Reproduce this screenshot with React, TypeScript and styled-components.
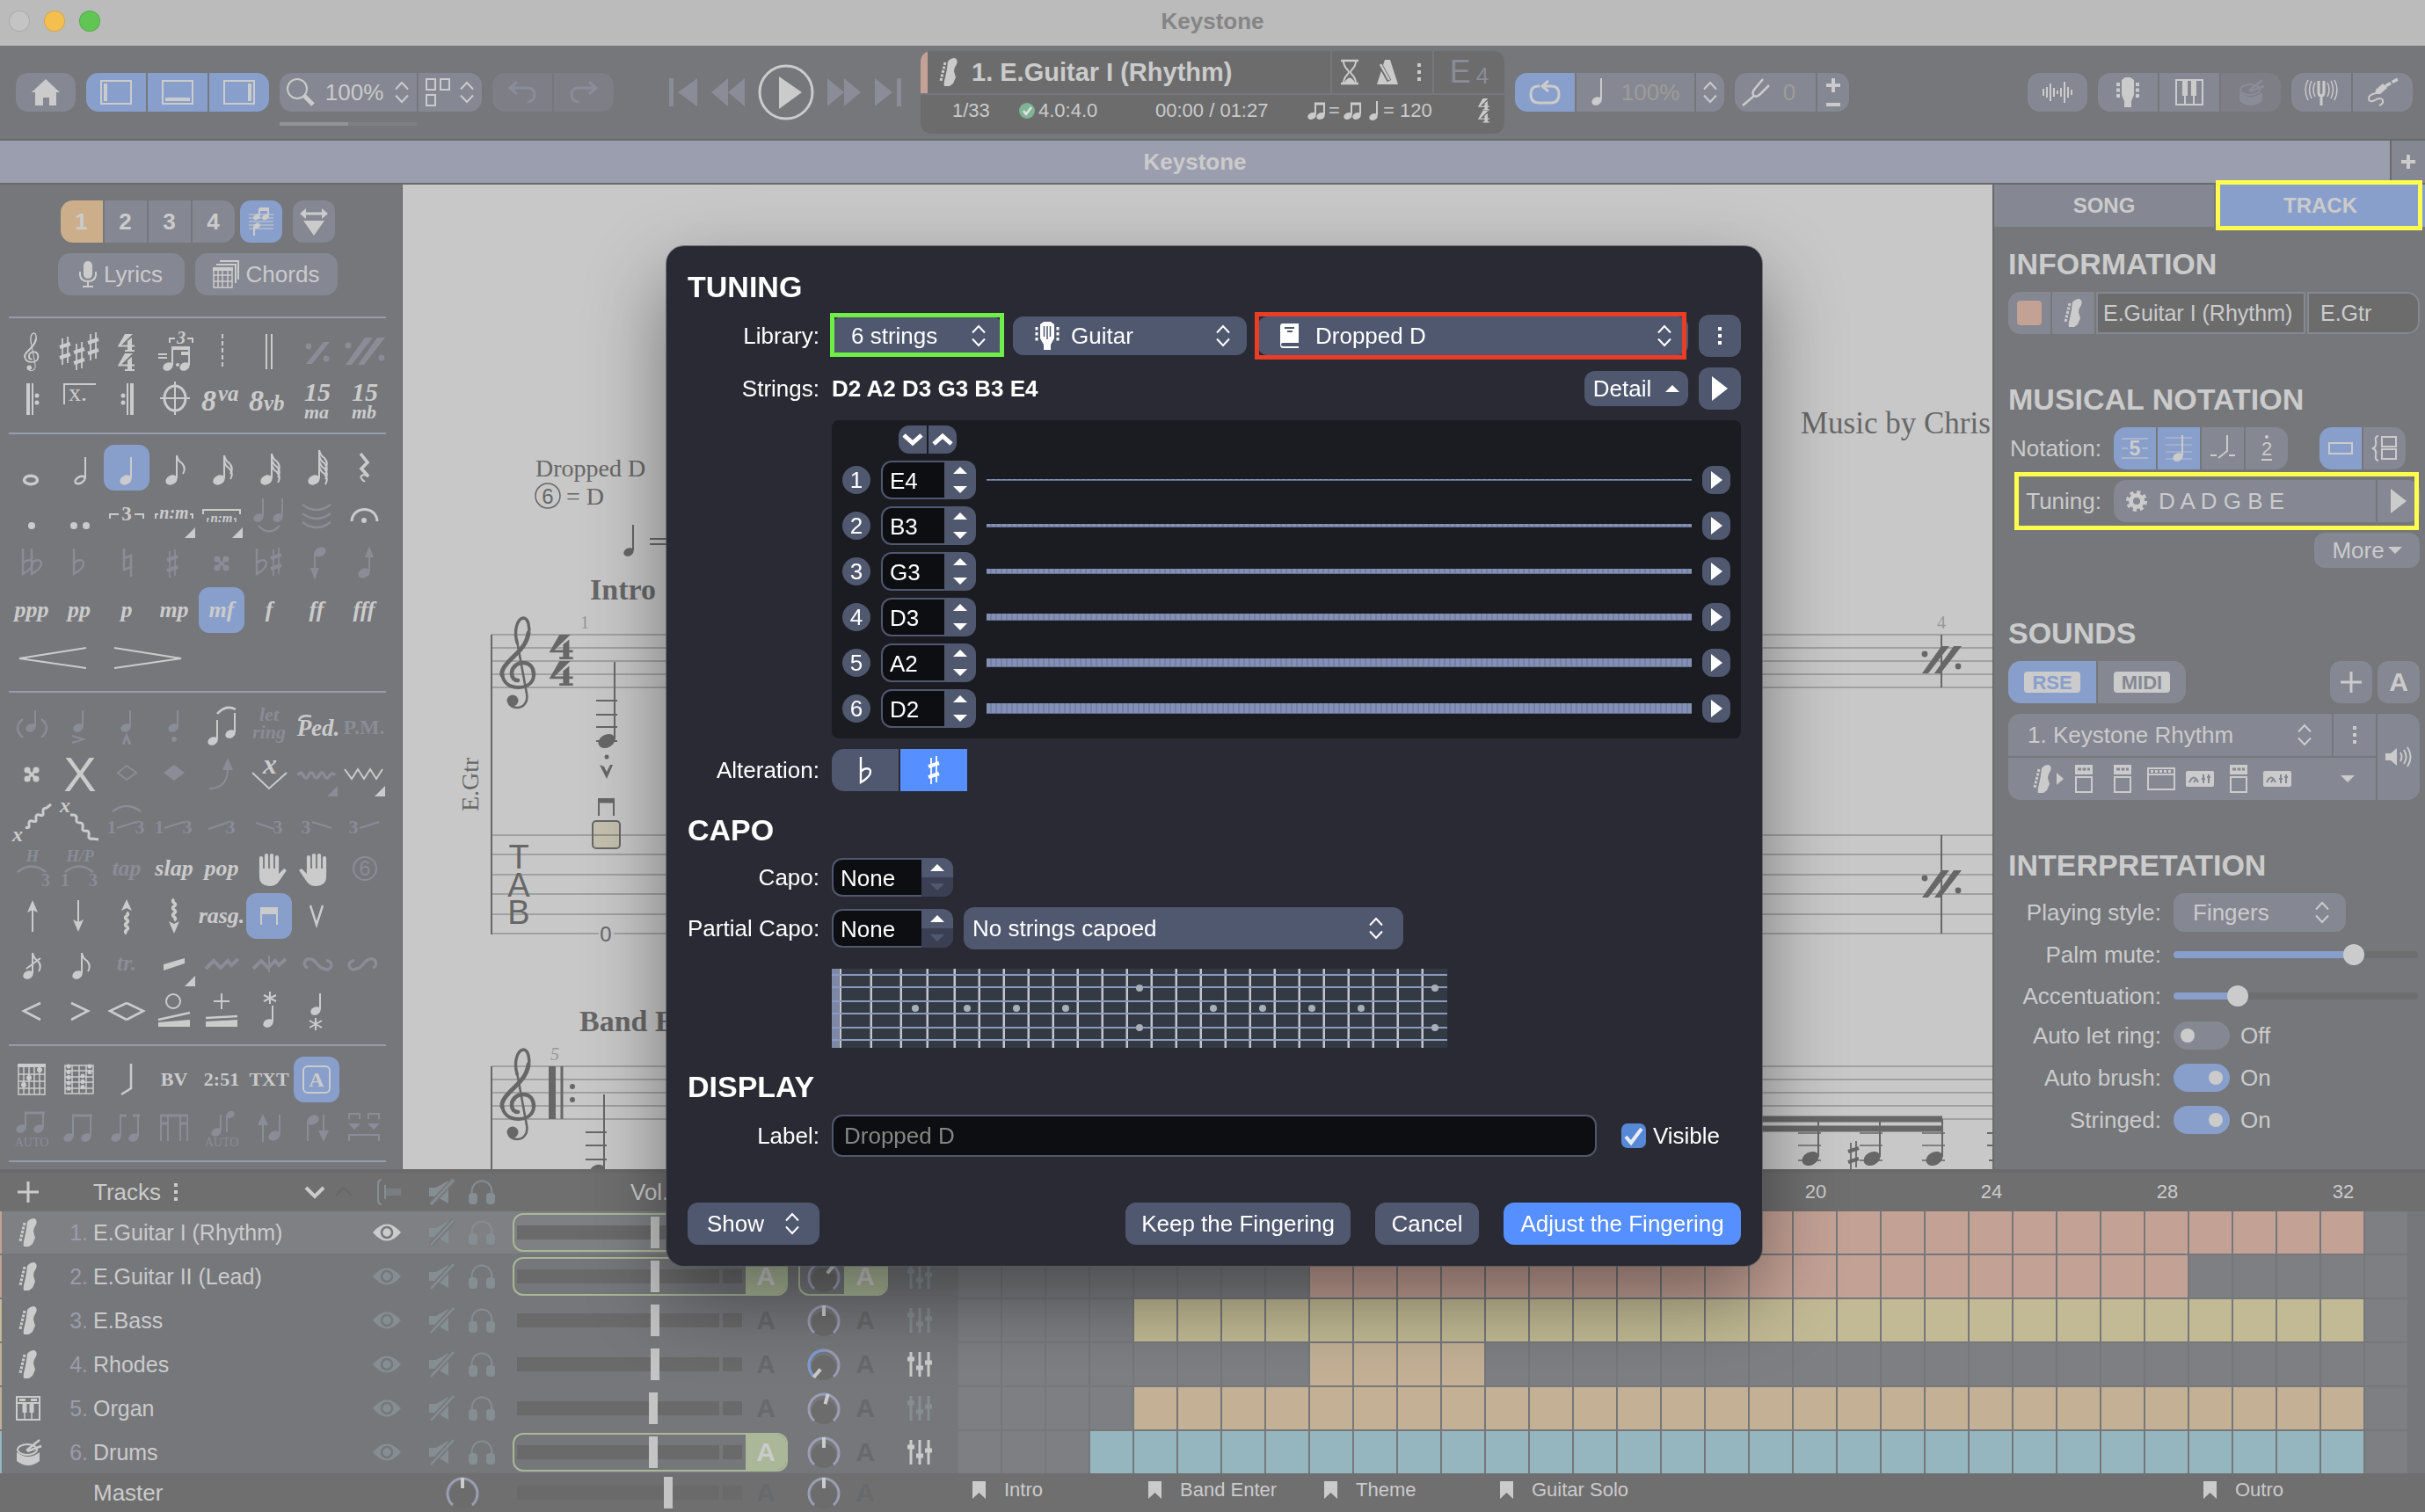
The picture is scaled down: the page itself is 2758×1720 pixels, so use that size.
import React from "react";
import styled, { createGlobalStyle, css } from "styled-components";

const c = {
  base: "#76777b",
  deep: "#6c6c6d",
  header: "#6f6f70",
  line: "#6a6a6b",
  button: "#858792",
  active: "#889fcc",
  text: "#cbcbcb",
  faint: "#8a8c97",
  teal: "#858e93",
  green: "#aab798",
  dialog: "#2a2a34",
  control: "#50586f",
  blue: "#568fff",
  field: "#0d0e11",
  ink: "#676767",
};
const sans = `"Liberation Sans", Arial, sans-serif`;
const serif = `"Liberation Serif", "Times New Roman", serif`;

const Global = createGlobalStyle`
  *, *::before, *::after { box-sizing: border-box; }
  body { margin: 0; background: ${c.base}; color: ${c.text}; font: 26px/30px ${sans}; overflow: hidden; }
  button, input, select { font: inherit; color: inherit; margin: 0; padding: 0; border: 0; background: none; }
  svg { display: block; flex: none; overflow: visible; }
  h2 { margin: 0; font-size: 34px; line-height: 40px; font-weight: 700; }
`;

/* ---------- drawing helpers ---------- */

type Kids = { children?: React.ReactNode };
const Svg = ({ w, h, vb, sw = 2, children }: Kids & { w: number; h: number; vb?: string; sw?: number }) => (
  <svg width={w} height={h} viewBox={vb || `0 0 ${w} ${h}`} fill="none" stroke="currentColor" strokeWidth={sw} aria-hidden="true">
    {children}
  </svg>
);
const Fill = ({ d }: { d: string }) => <path d={d} fill="currentColor" stroke="none" />;
const Dot = ({ x, y, r = 3 }: { x: number; y: number; r?: number }) => <circle cx={x} cy={y} r={r} fill="currentColor" stroke="none" />;
const T = ({ x, y, s, b, i, a = "middle", f = serif, children }: Kids & { x: number; y: number; s: number; b?: boolean; i?: boolean; a?: "middle" | "start" | "end"; f?: string }) => (
  <text x={x} y={y} fontSize={s} fontFamily={f} fontWeight={b ? 700 : 400} fontStyle={i ? "italic" : "normal"} textAnchor={a} fill="currentColor" stroke="none">
    {children}
  </text>
);
const Note = ({ x, y, h = 26, f = 0, r = 7, down }: { x: number; y: number; h?: number; f?: number; r?: number; down?: boolean }) => {
  const sx = down ? x - r + 1 : x + r - 1;
  const top = y - h;
  return (
    <g>
      <ellipse cx={x} cy={y} rx={r} ry={r * 0.74} transform={`rotate(-28 ${x} ${y})`} fill="currentColor" stroke="none" />
      <path d={`M${sx} ${down ? y + 1 : y - 2}V${down ? y + h : top}`} />
      {Array.from({ length: f }, (_, n) => (
        <path key={n} d={`M${sx} ${top + n * 6}q1 6 6 9q5 6 1 12`} />
      ))}
    </g>
  );
};
const Sharp = ({ x, y, k = 1 }: { x: number; y: number; k?: number }) => (
  <g transform={`translate(${x} ${y}) scale(${k})`}>
    <path d="M-3 -14V16M3 -16V14" strokeWidth="1.8" />
    <path d="M-6 -4L6 -8M-6 8L6 4" strokeWidth="4" />
  </g>
);
const Flat = ({ x, y, k = 1 }: { x: number; y: number; k?: number }) => (
  <g transform={`translate(${x} ${y}) scale(${k})`}>
    <path d="M-5 -16V13C2 9 6 5 6 1C6 -4 -1 -4 -5 1" strokeWidth="2.4" />
  </g>
);
const Clef = ({ x, y, k = 1 }: { x: number; y: number; k?: number }) => (
  <g transform={`translate(${x} ${y}) scale(${k})`} strokeLinecap="round">
    <path d="M20 30C16 14 21 3 27 2C33 2 35 13 33 21" strokeWidth="3.4" />
    <path d="M33 19C31 33 22 40 12 50C4 58 2 63 3 67" strokeWidth="5" />
    <path d="M3 65C4 76 12 81 22 81C33 81 39 74 39 67" strokeWidth="4" />
    <path d="M39 67C39 58 34 53 27 53C19 53 14 59 14 65C14 70 17 73 21 73" strokeWidth="4.6" />
    <path d="M20 28L31 88C33 98 27 104 20 104C15 104 11 101 11 98" strokeWidth="2.6" />
    <circle cx="15" cy="96" r="6.5" fill="currentColor" stroke="none" />
  </g>
);
const Four = ({ x, y, k }: { x: number; y: number; k: number }) => (
  <g transform={`translate(${x} ${y}) scale(${k})`}>
    <path d="M0 14L8 0H17L4 12.5H11V8L16 4V12.5H19V14.5H16V18H19V20H8V18H11V14.5H0Z" fill="currentColor" stroke="none" />
  </g>
);
const Repeat = ({ x, y, n = 1 }: { x: number; y: number; n?: number }) => (
  <g>
    {n === 1 ? <Fill d={`M${x - 13} ${y + 13}L${x + 7} ${y - 12}H${x + 14}L${x - 6} ${y + 13}Z`} /> : (
      <Fill d={`M${x - 22} ${y + 15}L${x} ${y - 16}H${x + 9}L${x - 15} ${y + 15}ZM${x - 8} ${y + 15}L${x + 14} ${y - 16}H${x + 23}L${x - 1} ${y + 15}Z`} />
    )}
    <Dot x={x - (n === 1 ? 10 : 19)} y={y - 7} r={3.4} />
    <Dot x={x + (n === 1 ? 10 : 19)} y={y + 7} r={3.4} />
  </g>
);
const Corner = () => <Fill d="M50 52H38L50 40Z" />;
const Arc = ({ d }: { d: string }) => <path d={d} strokeWidth="2.5" />;

const Chevrons = () => (
  <Svg w={18} h={26}><path d="M2 9.5L9 2L16 9.5M2 16.5L9 24L16 16.5" /></Svg>
);
const GuitarHead = () => (
  <Svg w={24} h={32}>
    <Fill d="M11 4Q14 0 19 0Q23 2 21 7Q18 11 18 15L20 22L17 29L13 32H7Q6 29 8 22Q10 14 11 4Z" />
    <path d="M8 5L3 26" strokeWidth="3" strokeDasharray="3 1.6" />
  </Svg>
);
const Headstock = () => (
  <Svg w={28} h={34}>
    <Fill d="M7 3L11 0H17L21 3V20L18 27V34H10V27L7 20Z" />
    <path d="M3 6V23M25 6V23" strokeWidth="4" strokeDasharray="4 2.5" />
  </Svg>
);
const DialogHeadstock = () => (
  <Svg w={28} h={32}>
    <Fill d="M6 3L10 0H18L22 3V19L18 26V32H10V26L6 19Z" />
    <path d="M2 6V22M26 6V22" strokeWidth="3" strokeDasharray="3.5 2.5" />
    <path d="M10.500 5V17M14 5V20M17.500 5V17" stroke={c.control} strokeWidth="1.500" />
  </Svg>
);
const Piano = () => (
  <Svg w={32} h={30}>
    <rect x="1" y="1" width="30" height="28" />
    <path d="M11 1V29M21 1V29" /><path d="M11 1V19M21 1V19" strokeWidth="6" />
  </Svg>
);
const Organ = () => (
  <Svg w={28} h={28}>
    <rect x="1" y="1" width="26" height="26" /><path d="M1 8H27" /><path d="M4 4.500H11M17 4.500H24" strokeWidth="3" />
    <path d="M10 8V27M18 8V27" strokeWidth="1.500" /><path d="M10 8V19M18 8V19" strokeWidth="5" />
  </Svg>
);
const Drum = () => (
  <Svg w={32} h={32}>
    <Fill d="M3 16Q16 26 29 16V26Q16 36 3 26Z" />
    <ellipse cx="15" cy="13" rx="11" ry="6" /><path d="M14 14L29 2M15 15L31 9" strokeWidth="2.500" />
  </Svg>
);
const PlayGlyph = ({ w = 18, h = 28 }: { w?: number; h?: number }) => (
  <Svg w={w} h={h}><Fill d={`M0 0L${w} ${h / 2}L0 ${h}Z`} /></Svg>
);
const Tri = ({ up, w = 14 }: { up?: boolean; w?: number }) => (
  <Svg w={w} h={8}><Fill d={up ? `M0 8L${w / 2} 0L${w} 8Z` : `M0 0L${w / 2} 8L${w} 0Z`} /></Svg>
);
const More3 = () => <Svg w={6} h={22}><path d="M3 1V5M3 9V13M3 17V21" strokeWidth="4" /></Svg>;
const Plus = ({ s = 22, t = 3 }: { s?: number; t?: number }) => (
  <Svg w={s} h={s} sw={t}><path d={`M${s / 2} 0V${s}M0 ${s / 2}H${s}`} /></Svg>
);

/* ---------- palette glyphs, each in a 52 x 52 box ---------- */

const wave = "q3 -6 6 0t6 0t6 0t6 0t6 0t6 0";
const glyphs: Record<string, React.ReactNode> = {
  clef: <Clef x={17} y={4} k={0.42} />,
  key: <><Sharp x={10} y={25} /><Sharp x={26} y={31} /><Sharp x={42} y={20} /></>,
  time: <><Four x={16} y={6} k={1} /><Four x={16} y={28} k={1} /></>,
  feel: <><T x={34} y={17} s={20} b i>3</T><path d="M21 16V11H27M41 11H47V16" /><path d="M8 29H18M8 33H18" /><Note x={19} y={43} r={6} h={22} /><Note x={38} y={43} r={6} h={22} /><path d="M23 22H44" strokeWidth="4" /><path d="M34 28H44" strokeWidth="4" /><Dot x={30} y={41} r={2} /></>,
  dashed: <path d="M27 6V46" strokeDasharray="5 3" />,
  dbl: <path d="M23 6V46M29 6V46" />,
  sim1: <Repeat x={27} y={27} />,
  sim2: <Repeat x={27} y={26} n={2} />,
  rptStart: <><path d="M22 8V44" strokeWidth="4" /><path d="M27 8V44" /><Dot x={32} y={22} r={2.5} /><Dot x={32} y={30} r={2.5} /></>,
  volta: <><path d="M9 32V9H45" /><T x={14} y={28} s={28} a="start">x.</T></>,
  rptEnd: <><path d="M32 8V44" strokeWidth="4" /><path d="M27 8V44" /><Dot x={22} y={22} r={2.5} /><Dot x={22} y={30} r={2.5} /></>,
  coda: <><ellipse cx="27" cy="25" rx="12" ry="14" strokeWidth="3" /><path d="M27 6V44M10 25H44" /></>,
  va: <><T x={3} y={39} s={34} b i a="start">8</T><T x={22} y={28} s={25} i b a="start">va</T></>,
  vb: <><T x={3} y={39} s={34} b i a="start">8</T><T x={20} y={39} s={25} i b a="start">vb</T></>,
  ma: <><T x={27} y={28} s={30} b i>15</T><T x={26} y={48} s={22} i b>ma</T></>,
  mb: <><T x={27} y={28} s={30} b i>15</T><T x={26} y={48} s={22} i b>mb</T></>,
  n1: <ellipse cx="25" cy="40" rx="7.500" ry="4.800" strokeWidth="3.500" />,
  n2: <><ellipse cx="27" cy="40" rx="6" ry="3.500" transform="rotate(-28 27 40)" strokeWidth="2.400" /><path d="M33 38V14" /></>,
  n4: <Note x={25} y={40} />,
  n8: <Note x={23} y={40} h={28} f={1} />,
  n16: <Note x={23} y={40} h={28} f={2} />,
  n32: <Note x={23} y={40} h={30} f={3} />,
  n64: <Note x={23} y={40} h={34} f={4} />,
  rest: <><path d="M22 10L30 20L23 27L31 36" strokeWidth="3.600" /><path d="M31 36C24 32 18 36 27 42" /></>,
  dot1: <Dot x={26} y={38} r={4} />,
  dot2: <><Dot x={20} y={38} r={4} /><Dot x={34} y={38} r={4} /></>,
  trip: <><path d="M7 30V25H17M35 25H45V30" /><T x={26} y={32} s={23} b>3</T></>,
  nm: <><path d="M5 30V25H8M44 25H47V30" /><T x={26} y={30} s={20} b i>n:m</T><Corner /></>,
  nm2: <><path d="M5 25V20H47V25" /><path d="M10 34V30H12M40 30H42V34" strokeWidth="1.500" /><T x={26} y={34} s={15} b i>n:m</T><Corner /></>,
  tie: <><Note x={14} y={29} r={6} h={22} /><Note x={36} y={29} r={6} h={22} /><Arc d="M14 38Q26 51 38 38" /></>,
  ties: <><Arc d="M10 14Q26 26 42 14" /><Arc d="M10 24Q26 36 42 24" /><Arc d="M10 34Q26 46 42 34" /></>,
  fermata: <><path d="M12 33C13 15 40 15 41 33" strokeWidth="3" /><Dot x={26} y={32} /></>,
  dflat: <><Flat x={21} y={26} /><Flat x={31} y={26} /></>,
  flat: <Flat x={25} y={26} />,
  natural: <path d="M23 10V34L31 31M31 42V18L23 21" strokeWidth="2.600" />,
  sharp: <Sharp x={24} y={27} />,
  dsharp: <><path d="M19 20L33 34M33 20L19 34" strokeWidth="3" /><path d="M21 22h.1M31 22h.1M21 32h.1M31 32h.1" strokeWidth="7" strokeLinecap="round" /></>,
  fs: <><Flat x={17} y={26} /><Sharp x={34} y={25} /></>,
  nd: <><Note x={30} y={14} down h={20} /><Fill d="M19 32H29L24 46Z" /></>,
  nu: <><Note x={26} y={38} h={20} /><Fill d="M27 20H37L32 7Z" /></>,
  cresc: <path d="M88 15L12 27L88 38" />,
  decr: <path d="M12 15L88 27L12 38" />,
  ghost: <><Note x={25} y={28} r={6} h={20} /><path d="M16 18Q4 28 16 39M37 18Q49 28 37 39" strokeWidth="2.500" /></>,
  acc: <><Note x={25} y={28} r={6} h={20} /><path d="M18 37L31 41L18 45" /></>,
  marc: <><Note x={25} y={28} r={6} h={20} /><path d="M22 47L26 37L30 47" strokeWidth="3" /></>,
  stac: <><Note x={25} y={28} r={6} h={20} /><Dot x={26} y={41} /></>,
  legato: <><Note x={16} y={43} r={6} h={24} /><Note x={36} y={35} r={6} h={24} /><Arc d="M21 12Q31 1 42 7" /></>,
  letring: <><T x={26} y={20} s={22} b i>let</T><T x={26} y={40} s={22} b i>ring</T></>,
  ped: <><T x={28} y={37} s={27} b i>Ped.</T><path d="M6 20Q8 12 20 15" strokeWidth="2.500" /></>,
  pm: <T x={26} y={35} s={24} b>P.M.</T>,
  bigx: <T x={27} y={46} s={56} f={sans}>X</T>,
  dia: <path d="M16 25L26 17L37 25L26 33Z" />,
  diaf: <Fill d="M14 25L26 16L38 25L26 34Z" />,
  bend: <><path d="M12 43Q33 43 33 20" /><Fill d="M27 22H39L33 8Z" /></>,
  trem: <><T x={27} y={26} s={32} b i>x</T><path d="M7 25L26 43L46 25" /></>,
  vib: <><path d={`M5 28${wave}q3 -4 6 0`} strokeWidth="3.500" /><Corner /></>,
  zig: <><path d="M4 21L12 32L19 21L26 32L33 21L40 32L47 21" /><Corner /></>,
  sl1: <><T x={10} y={49} s={24} b i>x</T><path d="M19 33q5 2 4 -3t4 -4q5 2 4 -3t4 -4q5 2 4 -3t4 -5l5 -4" strokeWidth="3" /></>,
  sl2: <><T x={10} y={16} s={24} b i>x</T><path d="M16 19h4q4 1 3 5t4 4q4 0 3 5t4 4q4 0 3 5t4 4l7 1" strokeWidth="3" /></>,
  s13a: <><T x={9} y={40} s={22} b>1</T><T x={41} y={40} s={22} b>3</T><path d="M15 34L37 27" /><Arc d="M10 15Q26 3 42 15" /></>,
  s13: <><T x={9} y={40} s={22} b>1</T><T x={41} y={40} s={22} b>3</T><path d="M15 34L37 27" /></>,
  in1: <><T x={36} y={40} s={22} b>3</T><path d="M11 35L32 28" /></>,
  in2: <><T x={36} y={40} s={22} b>3</T><path d="M11 28L32 35" /></>,
  out1: <><T x={14} y={40} s={22} b>3</T><path d="M21 27L43 34" /></>,
  out2: <><T x={14} y={40} s={22} b>3</T><path d="M21 34L43 27" /></>,
  hh: <><T x={27} y={18} s={19} b i>H</T><Arc d="M10 30Q26 17 42 30" /><T x={42} y={46} s={20} b>3</T></>,
  hp: <><T x={27} y={18} s={19} b i>H/P</T><Arc d="M10 30Q26 17 42 30" /><T x={10} y={46} s={20} b>1</T><T x={42} y={46} s={20} b>3</T></>,
  hand: <><path d="M17 34V14M23 32V11M29 32V11M35 34V13" strokeWidth="4.200" strokeLinecap="round" /><Fill d="M15 26H37V32L43 26L46 28L37 41Q34 46 26 46Q15 45 15 36Z" /></>,
  hand2: <g transform="translate(52 0) scale(-1 1)"><path d="M17 34V14M23 32V11M29 32V11M35 34V13" strokeWidth="4.200" strokeLinecap="round" /><Fill d="M15 26H37V32L43 26L46 28L37 41Q34 46 26 46Q15 45 15 36Z" /></g>,
  six: <><circle cx="27" cy="26" r="13" /><T x={27} y={34} s={23} f={sans}>6</T></>,
  au: <><path d="M27 44V18" /><Fill d="M21 22L27 8L33 22L27 19Z" /></>,
  ad: <><path d="M25 8V34" /><Fill d="M19 30L25 44L31 30L25 33Z" /></>,
  wu: <><path d="M26 46q-3 -2 0 -4t0 -4t0 -4t0 -4t0 -4t0 -4" strokeWidth="3.500" /><Fill d="M20 20L26 7L32 20L26 17Z" /></>,
  wd: <><path d="M26 7q-3 2 0 4t0 4t0 4t0 4t0 4t0 4" strokeWidth="3.500" /><Fill d="M20 32L26 46L32 32L26 35Z" /></>,
  down: <><path d="M17 36V17H35V36" /><path d="M16 20H36" strokeWidth="8" /></>,
  up: <path d="M19 14L26 36L33 14" strokeWidth="2.500" />,
  gr1: <><Note x={22} y={39} r={6} h={25} f={1} /><path d="M20 32L36 20" /></>,
  gr2: <Note x={24} y={39} r={6} h={25} f={1} />,
  bar1: <><Fill d="M14 27L38 20V26L14 34Z" /><Corner /></>,
  mord: <path d="M8 32L17 23L25 31L33 23L37 28L45 21" strokeWidth="4" />,
  mord2: <><path d="M8 32L17 23L25 31L33 23L37 28L45 21" strokeWidth="4" /><path d="M26 17V36" /></>,
  turn: <path d="M16 31A5 5 0 1 1 19 21C26 21 27 32 35 32A5 5 0 1 0 37 23" strokeWidth="3.500" />,
  turn2: <g transform="translate(52 0) scale(-1 1)"><path d="M16 31A5 5 0 1 1 19 21C26 21 27 32 35 32A5 5 0 1 0 37 23" strokeWidth="3.500" /></g>,
  lt: <path d="M36 17L17 26L36 36" strokeWidth="2.600" />,
  gt: <path d="M17 17L36 26L17 36" strokeWidth="2.600" />,
  ltgt: <path d="M26 17L7 26L26 36M26 17L45 26L26 36" strokeWidth="2.600" />,
  wahO: <><circle cx="25" cy="15" r="8" /><path d="M8 36L44 28" strokeWidth="2.500" /><Fill d="M8 39L44 36V44H8Z" /></>,
  wahC: <><path d="M26 6V24M17 15H35" /><path d="M8 34L44 32" strokeWidth="2.500" /><Fill d="M8 38L44 36V44H8Z" /></>,
  st1: <><path d="M27 4V18M20 8L34 15M34 8L20 15" /><Note x={25} y={40} r={6} h={20} /></>,
  st2: <><Note x={25} y={26} r={6} h={20} /><path d="M25 34V48M18 37L32 45M32 37L18 45" /></>,
  chord: <><path d="M11 10V43H41V10M17 10V43M23 10V43M29 10V43M35 10V43M11 20H41M11 28H41M11 36H41" strokeWidth="1.500" /><path d="M10 10H42" strokeWidth="4" /><Dot x={35} y={15} /><Dot x={23} y={24} /><Dot x={17} y={32} /></>,
  scale: <><path d="M10 10V42H42V10ZM18 10V42M26 10V42M34 10V42M10 16H42M10 23H42M10 29H42M10 36H42" strokeWidth="1.500" /><path d="M14 11V42M38 11V20M30 22V38" strokeWidth="5" strokeLinecap="round" strokeDasharray=".1 6.200" /></>,
  slash: <path d="M31 8V36L20 43" strokeWidth="2.500" />,
  letterA: <><rect x="11" y="11" width="30" height="30" rx="5" /><T x={26} y={34} s={24} b>A</T></>,
  beamA: <><Note x={14} y={28} r={6} h={19} /><Note x={34} y={28} r={6} h={19} /><path d="M18 10H41" strokeWidth="3" /><T x={26} y={48} s={14}>AUTO</T></>,
  beam1: <><Note x={14} y={38} r={6} h={26} /><Note x={34} y={38} r={6} h={26} /><path d="M18 13H41" strokeWidth="3" /></>,
  beam2: <><Note x={14} y={38} r={6} h={26} /><Note x={34} y={38} r={6} h={26} /><path d="M18 13H26M33 13H41" strokeWidth="3" /></>,
  beam3: <><path d="M11 42V12M19 42V12M33 42V12M41 42V12" /><path d="M10 13H42M11 22H19M33 22H41" strokeWidth="3" /></>,
  stemA: <><Note x={20} y={32} r={6} h={20} /><Note x={36} y={12} r={5} down h={20} /><T x={26} y={48} s={14}>AUTO</T></>,
  stemU: <><path d="M19 43V16" /><Fill d="M13 24L19 11L25 24Z" /><Note x={32} y={36} h={24} /></>,
  stemD: <><Note x={22} y={18} down h={24} /><path d="M34 12V38" /><Fill d="M28 30L34 43L40 30Z" /></>,
  brk: <><path d="M9 17V11H21V17M31 17V11H43V17M9 42V35H43V42" /><Fill d="M8 22H22L15 29ZM30 22H44L37 29Z" /></>,
};

type Cell = [string, string?, string?]; // glyph name or =text, state (on / off), upright text
const palette: Cell[][][] = [
  [
    [["clef"], ["key"], ["time"], ["feel"], ["dashed"], ["dbl"], ["sim1", "off"], ["sim2", "off"]],
    [["rptStart"], ["volta"], ["rptEnd"], ["coda"], ["va"], ["vb"], ["ma"], ["mb"]],
  ],
  [
    [["n1"], ["n2"], ["n4", "on"], ["n8"], ["n16"], ["n32"], ["n64"], ["rest"]],
    [["dot1"], ["dot2"], ["trip"], ["nm"], ["nm2"], ["tie", "off"], ["ties", "off"], ["fermata"]],
    [["dflat", "off"], ["flat", "off"], ["natural", "off"], ["sharp", "off"], ["dsharp", "off"], ["fs", "off"], ["nd", "off"], ["nu", "off"]],
    [["=ppp"], ["=pp"], ["=p"], ["=mp"], ["=mf", "on"], ["=f"], ["=ff"], ["=fff"]],
    [["cresc", "wide"], ["decr", "wide"]],
  ],
  [
    [["ghost", "off"], ["acc", "off"], ["marc", "off"], ["stac", "off"], ["legato"], ["letring", "off"], ["ped"], ["pm", "off"]],
    [["dsharp"], ["bigx"], ["dia", "off"], ["diaf", "off"], ["bend", "off"], ["trem"], ["vib", "off"], ["zig"]],
    [["sl1"], ["sl2"], ["s13a", "off"], ["s13", "off"], ["in1", "off"], ["in2", "off"], ["out1", "off"], ["out2", "off"]],
    [["hh", "off"], ["hp", "off"], ["=tap", "off"], ["=slap"], ["=pop"], ["hand"], ["hand2"], ["six", "off"]],
    [["au"], ["ad"], ["wu"], ["wd"], ["=rasg."], ["down", "on"], ["up"]],
    [["gr1"], ["gr2"], ["=tr.", "off"], ["bar1"], ["mord", "off"], ["mord2", "off"], ["turn", "off"], ["turn2", "off"]],
    [["lt"], ["gt"], ["ltgt"], ["wahO"], ["wahC"], ["st1"], ["st2"]],
  ],
  [
    [["chord"], ["scale"], ["slash"], ["=BV", "", "up"], ["=2:51", "", "up"], ["=TXT", "", "up"], ["letterA", "on"]],
    [["beamA", "off"], ["beam1", "off"], ["beam2", "off"], ["beam3", "off"], ["stemA", "off"], ["stemU", "off"], ["stemD", "off"], ["brk", "off"]],
  ],
];

/* ---------- shell ---------- */

const Shell = styled.div`
  display: grid;
  grid-template-rows: 52px 108px 50px minmax(0, 1fr) auto;
  height: 100vh;
`;
const TitleBar = styled.header`
  display: grid;
  grid-template-columns: 1fr auto 1fr;
  align-items: center;
  padding: 0 10px 4px;
  background: #bbb;
  color: #858585;
  font-weight: 700;
`;
const Lights = styled.div`display: flex; gap: 16px;`;
const Light = styled.button<{ $c: string }>`
  width: 24px; height: 24px; border-radius: 50%;
  background: ${(p) => p.$c}; border: 1px solid rgba(0, 0, 0, 0.12);
`;
const Toolbar = styled.div`
  display: grid;
  grid-template-columns: minmax(0, 1fr) 664px minmax(0, 1fr);
  align-items: center;
  border-bottom: 2px solid ${c.line};
`;
const ToolSide = styled.div<{ $right?: boolean }>`
  display: flex; align-items: center; gap: 12px;
  padding: ${(p) => (p.$right ? "0 14px 0 12px" : "0 22px 0 18px")};
`;
const Group = styled.div<{ $r?: number; $push?: boolean }>`
  display: flex; gap: 2px; border-radius: ${(p) => p.$r || 14}px; overflow: hidden;
  ${(p) => p.$push && css`margin-left: auto;`}
`;
const Btn = styled.button<{ $w?: number; $h?: number; $on?: boolean; $off?: boolean; $bg?: string; $r?: number; $spread?: boolean }>`
  display: flex; align-items: center; justify-content: center; gap: 8px; flex: none;
  ${(p) => p.$w && css`width: ${p.$w}px;`}
  ${(p) => p.$spread && css`justify-content: space-between; padding: 0 8px;`}
  height: ${(p) => p.$h || 44}px;
  border-radius: ${(p) => p.$r || 0}px;
  background: ${(p) => p.$bg || (p.$on ? c.active : p.$off ? "#7d7e86" : c.button)};
  color: ${(p) => (p.$off ? c.faint : c.text)};
`;
const Faded = styled.span`color: #9d9d98;`;
const ZoomWrap = styled.div`position: relative;`;
const ZoomBar = styled.div`
  position: absolute; left: 0; bottom: -16px; width: 156px; height: 4px;
  background: linear-gradient(90deg, #949498 50%, #7b8084 50%);
`;
const Transport = styled.div`display: flex; align-items: center; gap: 16px; margin-left: auto; color: ${c.faint};`;
const Bare = styled.button<{ $bright?: boolean }>`
  display: flex; align-items: center; justify-content: center;
  color: ${(p) => (p.$bright ? c.text : "inherit")};
`;
const Display = styled.section`
  display: grid; grid-template-rows: 50px 44px;
  border-radius: 12px; background: ${c.deep}; overflow: hidden;
`;
const DisplayTop = styled.div`
  display: grid; grid-template-columns: 466px 118px 1fr;
  border-bottom: 2px solid ${c.base};
`;
const TrackTitle = styled.div`
  display: flex; align-items: center; gap: 14px; padding-left: 12px;
  border-left: 8px solid #c4a195; font-size: 29px; font-weight: 700;
`;
const DisplayTools = styled.div`
  display: flex; align-items: center; justify-content: space-between; padding: 0 12px 0 10px;
  border-left: 2px solid ${c.base}; border-right: 2px solid ${c.base};
`;
const Pitch = styled.div`display: flex; align-items: center; justify-content: center; gap: 6px; color: ${c.faint}; font-size: 36px;
  sub { font-size: 26px; line-height: 26px; padding-top: 8px; }`;
const DisplayInfo = styled.div`
  display: grid; grid-template-columns: 76px 155px 173px 70px 1fr;
  align-items: center; padding: 0 16px 8px 36px; font-size: 22px;
`;
const Inline = styled.span`display: flex; align-items: center; gap: 4px;`;
const Tempo = styled.div`display: flex; align-items: center; justify-content: space-between;`;
const Pct = styled(Faded)`margin-left: 12px;`;

const TabBar = styled.nav`
  display: grid; grid-template-columns: 1fr 38px; column-gap: 2px;
  border-bottom: 2px solid ${c.line}; background: ${c.line};
`;
const Tab = styled.button<{ $plain?: boolean }>`
  display: flex; align-items: center; justify-content: center;
  background: ${(p) => (p.$plain ? c.button : "#9b9eae")}; font-weight: 700;
`;

const Main = styled.main`display: grid; grid-template-columns: 458px minmax(0, 1fr) 492px; min-height: 0;`;

/* ---------- palette ---------- */

const Left = styled.aside`display: flex; flex-direction: column; padding: 18px 18px 0 10px; border-right: 1px solid ${c.line};`;
const LeftTop = styled.div`display: flex; justify-content: center; gap: 12px; margin-bottom: 12px; &:nth-child(2) { margin-bottom: 24px; }`;
const Pair = styled.div`display: flex; gap: 6px;`;
const Palette = styled.section`
  display: flex; flex-direction: column; gap: 2px; padding: 12px 0; border-top: 2px solid #989bae;
  &:last-child { border-bottom: 2px solid #989bae; }
`;
const PaletteRow = styled.div`display: flex; gap: 2px;`;
const PaletteCell = styled.button<{ $s?: string; $upright?: boolean }>`
  display: flex; align-items: center; justify-content: center; flex: none;
  width: ${(p) => (p.$s === "wide" ? 106 : 52)}px; height: 52px; border-radius: 12px;
  color: ${(p) => (p.$s === "off" ? c.faint : c.text)};
  background: ${(p) => (p.$s === "on" ? c.active : "none")};
  font: ${(p) => (p.$upright ? "700 22px" : "italic 700 26px")} / 30px ${serif};
  white-space: nowrap;
`;
const Bold = styled.b`font-size: 26px;`;

/* ---------- score ---------- */

const Paper = styled.div`background: #c8c8c8; color: ${c.ink}; overflow: hidden; min-width: 0;`;
const Lines = ({ ys }: { ys: number[] }) => <path d={ys.map((y) => `M559 ${y}H2266`).join("")} stroke="#949494" strokeWidth="1.500" />;

const Score = () => (
  <Paper>
    <svg width={1808} height={1120} viewBox="458 210 1808 1120" fill="none" stroke="currentColor" strokeWidth={2} role="img" aria-label="Score">
      <T x={609} y={542} s={28} a="start">Dropped D</T>
      <circle cx="623" cy="564" r="14" strokeWidth="1.500" />
      <T x={623} y={573} s={24} f={sans}>6</T>
      <T x={644} y={574} s={28} a="start">= D</T>
      <Note x={715} y={628} r={6} h={31} />
      <path d="M739 613H780M739 619H780" />
      <T x={671} y={682} s={34} b a="start">Intro</T>
      <T x={2048} y={493} s={35} a="start">Music by Chris</T>
      <g color="#979797">
        <T x={665} y={715} s={20}>1</T><T x={2208} y={715} s={20}>4</T><T x={631} y={1206} s={20} i>5</T>
      </g>
      <g transform="rotate(-90 544 923)"><T x={544} y={923} s={28} a="start">E.Gtr</T></g>
      <Lines ys={[722, 737, 752, 767, 782]} />
      <Lines ys={[950, 972, 995, 1017, 1040, 1062]} />
      <Lines ys={[1213, 1228, 1243, 1258, 1273]} />
      <path d="M559 722V1063M559 1213V1330" />
      <Clef x={568} y={701} /><Clef x={568} y={1192} />
      <Four x={625} y={722} k={1.4} /><Four x={625} y={752} k={1.4} />
      <Note x={690} y={843} r={10} h={90} />
      <path d="M678 797H702M678 813H702M678 827H702M678 843H702" />
      <Dot x={690} y={861} r={2.5} />
      <Fill d="M682 870L687 872L690 878L694 870H697L690 886Z" />
      <path d="M681 928V909H698V928" /><path d="M681 911H698" strokeWidth="5" />
      <rect x="674" y="934" width="31" height="31" rx="4" fill="#c5bfae" /><path d="M674 950H705" strokeWidth="1" />
      <T x={590} y={988} s={38} f={sans}>T</T><T x={590} y={1020} s={38} f={sans}>A</T><T x={590} y={1051} s={38} f={sans}>B</T>
      <rect x="681" y="1056" width="17" height="14" fill="#c8c8c8" stroke="none" />
      <T x={689} y={1071} s={24} f={sans}>0</T>
      <T x={659} y={1173} s={34} b a="start">Band Enter</T>
      <path d="M628 1213V1273" strokeWidth="8" /><path d="M639 1213V1273" strokeWidth="3" />
      <Dot x={651} y={1236} /><Dot x={651} y={1251} />
      <path d="M687 1245V1330M666 1288H690M666 1303H690M666 1319H690" />
      <Note x={679} y={1332} r={9} h={10} />
      <path d="M2208 722V782M2208 950V1062" />
      <Repeat x={2208} y={751} n={2} /><Repeat x={2208} y={1006} n={2} />
      <path d="M1950 1273H2209M1950 1284H2209" strokeWidth="7" />
      {[2059, 2129, 2200].map((x) => (
        <g key={x}>
          <Note x={x} y={1318} r={10} h={45} />
          <path d={`M${x - 14} 1289H${x + 12}M${x - 14} 1303H${x + 12}M${x - 14} 1320H${x + 12}`} strokeWidth="1.500" />
        </g>
      ))}
      <Sharp x={2108} y={1314} />
      <path d="M2260 1289H2270M2260 1303H2270M2262 1320H2270" />
    </svg>
  </Paper>
);

/* ---------- inspector ---------- */

const Right = styled.aside`border-left: 2px solid ${c.line}; min-width: 0;`;
const RightTabs = styled.div`display: grid; grid-template-columns: 250px 1fr; gap: 2px; height: 48px;`;
const RightTab = styled.button<{ $on?: boolean }>`
  position: relative; background: ${(p) => (p.$on ? c.active : c.button)}; font-size: 24px; font-weight: 700;
`;
const Mark = styled.span<{ $c: string; $inset: string }>`
  position: absolute; inset: ${(p) => p.$inset}; border: 5px solid ${(p) => p.$c}; pointer-events: none; z-index: 2;
`;
const Inspector = styled.div`display: flex; flex-direction: column; gap: 54px; padding: 22px 6px 0 16px;`;
const Panel = styled.section`display: flex; flex-direction: column; gap: 12px;`;
const Field = styled.div<{ $label?: number }>`
  position: relative; display: grid; grid-template-columns: ${(p) => p.$label || 106}px 1fr; column-gap: 14px; align-items: center;
  > :first-child { text-align: right; }
`;
const Row = styled.div<{ $gap?: number; $end?: boolean; $between?: boolean }>`
  display: flex; align-items: center; gap: ${(p) => p.$gap || 0}px;
  ${(p) => p.$end && css`justify-content: flex-end;`}
  ${(p) => p.$between && css`justify-content: space-between;`}
`;
const DimInput = styled.input`
  flex: 1; min-width: 0; height: 48px; padding: 0 6px; background: ${c.deep}; border: 2px solid ${c.button};
  font-size: 25px;
  &:last-child { flex: 0 0 128px; padding: 0 13px; border-radius: 0 14px 14px 0; }
`;
const Swatch = styled.span`width: 28px; height: 28px; border-radius: 4px; background: #c4a195;`;
const Chip = styled.span<{ $c: string }>`
  width: 64px; height: 24px; border-radius: 4px; background: ${c.text}; color: ${(p) => p.$c};
  font-size: 22px; line-height: 25px; font-weight: 700;
`;
const SoundBox = styled.div`display: grid; grid-template-columns: 1fr 48px; gap: 2px; height: 98px; border-radius: 14px; overflow: hidden;`;
const SoundMain = styled.div`display: grid; grid-template-rows: 1fr 1fr; gap: 2px;`;
const SoundTop = styled.div`display: grid; grid-template-columns: 1fr 48px; gap: 2px;`;
const Chain = styled.div`
  display: grid; grid-template-columns: 38px repeat(6, 44px) 1fr; align-items: center; justify-items: center;
  padding: 0 24px 0 26px; background: ${c.button};
  > :last-child { justify-self: end; }
`;
const Interp = styled.div`display: grid; grid-template-rows: 44px 52px 42px 48px 48px 48px;`;
const Slider = styled.input.attrs({ type: "range" })`
  appearance: none; width: 278px; height: 24px;
  &::-webkit-slider-runnable-track {
    height: 8px; border-radius: 4px;
    background: linear-gradient(90deg, ${c.active} var(--fill), #6d6e70 var(--fill));
  }
  &::-webkit-slider-thumb { appearance: none; width: 24px; height: 24px; margin-top: -8px; border-radius: 50%; background: ${c.text}; }
`;
const Switch = styled.input.attrs({ type: "checkbox" })`
  appearance: none; width: 64px; height: 32px; border-radius: 16px; background: ${c.button}; display: flex; align-items: center; padding: 0 8px;
  &::before { content: ""; width: 16px; height: 16px; border-radius: 50%; background: ${c.text}; }
  &:checked { background: ${c.active}; justify-content: flex-end; }
`;

/* A drop-down whose icon and chevrons share one grid cell with the select. */
const SelectWrap = styled.div<{ $w?: number; $h?: number; $bg?: string; $r?: number; $pad?: number; $end?: number }>`
  position: relative; display: grid; align-items: center; height: ${(p) => p.$h || 44}px;
  ${(p) => (p.$w ? css`width: ${p.$w}px;` : css`flex: 1;`)}
  > * { grid-area: 1 / 1; }
  > select {
    appearance: none; width: 100%; height: 100%; border-radius: ${(p) => p.$r ?? 12}px;
    background: ${(p) => p.$bg || c.control}; padding-left: ${(p) => p.$pad || 20}px;
  }
  > svg { pointer-events: none; }
  > svg:last-of-type { justify-self: end; margin-right: ${(p) => p.$end || 16}px; }
`;
const SelIcon = styled.span`justify-self: start; margin-left: 25px; pointer-events: none;`;
type DropProps = { label: string; value: string; id?: string; icon?: React.ReactNode; mark?: React.ReactNode; w?: number; h?: number; bg?: string; r?: number; pad?: number; end?: number };
const Drop = ({ label, value, id, icon, mark, w, h, bg, r, pad, end }: DropProps) => (
  <SelectWrap $w={w} $h={h} $bg={bg} $r={r} $pad={pad} $end={end}>
    <select id={id} aria-label={label} defaultValue={value}><option>{value}</option></select>
    {icon && <SelIcon>{icon}</SelIcon>}
    <Chevrons />
    {mark}
  </SelectWrap>
);

const Amp = () => <Svg w={20} h={32}><rect x="1" y="14" width="18" height="17" /><Fill d="M0 0H20V11H0Z" /><path d="M3 5H17" stroke={c.button} strokeDasharray="4 1.500" strokeWidth="3" /></Svg>;
const Combo = () => <Svg w={32} h={26}><rect x="1" y="1" width="30" height="24" /><path d="M1 8H31" /><path d="M4 4.500H28" strokeDasharray="3 2" strokeWidth="3" /></Svg>;
const Meter = () => <Svg w={32} h={18}><rect width="32" height="18" rx="2" fill="currentColor" stroke="none" /><path d="M4 13Q9 2 14 13M9 13L12 8M20 4V14M26 4V14M18 9H22M24 7H28" stroke={c.button} /></Svg>;

const TuningBtn = styled.button`
  display: flex; align-items: center; gap: 13px; flex: 1; height: 48px; padding-left: 14px; background: ${c.button};
`;
const Heavy = styled.b`font-size: 30px;`;

const RightPanel = () => (
  <Right>
    <RightTabs role="tablist">
      <RightTab role="tab">SONG</RightTab>
      <RightTab role="tab" $on>TRACK<Mark $c="#fdfd4e" $inset="-5px 3px -4px 0" /></RightTab>
    </RightTabs>
    <Inspector>
      <Panel>
        <h2>INFORMATION</h2>
        <Group $r={14}>
          <Btn $w={48} $h={48} aria-label="Track colour"><Swatch /></Btn>
          <Btn $w={48} $h={48} aria-label="Instrument"><GuitarHead /></Btn>
          <DimInput aria-label="Track name" defaultValue="E.Guitar I (Rhythm)" />
          <DimInput aria-label="Short name" defaultValue="E.Gtr" />
        </Group>
      </Panel>
      <Panel>
        <h2>MUSICAL NOTATION</h2>
        <Field>
          <span>Notation:</span>
          <Row $gap={36}>
            <Group>
              <Btn $w={48} $h={48} $on aria-label="Tablature"><Svg w={30} h={24} sw={1.5}><path d="M0 1H30M0 12H7M23 12H30M0 23H30" opacity=".7" /><T x={15} y={20} s={23} b f={sans}>5</T></Svg></Btn>
              <Btn $w={48} $h={48} $on aria-label="Standard"><Svg w={30} h={30}><path d="M0 3H30M0 11H30M0 19H30M0 27H30" opacity=".5" strokeWidth="1.500" /><Note x={14} y={25} r={6} h={25} /></Svg></Btn>
              <Btn $w={48} $h={48} aria-label="Slash"><Svg w={28} h={30}><path d="M19 0V18L9 26M0 23H7M21 23H28" /></Svg></Btn>
              <Btn $w={48} $h={48} aria-label="Numbered"><Svg w={14} h={30}><T x={7} y={23} s={22} f={sans}>2</T><path d="M1 28H13" /><Dot x={7} y={2} r={2} /></Svg></Btn>
            </Group>
            <Group>
              <Btn $w={48} $h={48} $on aria-label="Single staff"><Svg w={28} h={14}><rect x="1" y="1" width="26" height="12" /></Svg></Btn>
              <Btn $w={48} $h={48} aria-label="Grand staff"><Svg w={28} h={30}><rect x="11" y="2" width="16" height="11" /><rect x="11" y="16" width="16" height="11" /><path d="M7 1Q3 1 4 7Q5 13 1 15Q5 17 4 22Q3 29 7 29" /></Svg></Btn>
            </Group>
          </Row>
        </Field>
        <Field>
          <span>Tuning:</span>
          <Group>
            <TuningBtn><Svg w={24} h={24}><circle cx="12" cy="12" r="6.500" strokeWidth="5" /><circle cx="12" cy="12" r="10" strokeWidth="4" strokeDasharray="4 3.850" /></Svg>D A D G B E</TuningBtn>
            <Btn $w={48} $h={48} aria-label="Play tuning"><PlayGlyph /></Btn>
          </Group>
          <Mark $c="#fdfd4e" $inset="-9px 1px -9px 7px" />
        </Field>
        <Row $end><Btn $w={120} $h={40} $r={12}><Inline>More<Tri w={16} /></Inline></Btn></Row>
      </Panel>
      <Panel>
        <h2>SOUNDS</h2>
        <Row $between>
          <Group>
            <Btn $w={100} $h={48} $on><Chip $c={c.active}>RSE</Chip></Btn>
            <Btn $w={100} $h={48}><Chip $c={c.button}>MIDI</Chip></Btn>
          </Group>
          <Pair>
            <Btn $w={48} $h={48} $r={12} aria-label="Add sound"><Plus s={24} /></Btn>
            <Btn $w={48} $h={48} $r={12} aria-label="Automation"><Heavy>A</Heavy></Btn>
          </Pair>
        </Row>
        <SoundBox>
          <SoundMain>
            <SoundTop>
              <Drop label="Sound" value="1. Keystone Rhythm" h={48} bg={c.button} r={0} pad={22} end={22} />
              <Btn $h={48} aria-label="Sound options"><More3 /></Btn>
            </SoundTop>
            <Chain><Inline><GuitarHead /><PlayGlyph w={8} h={14} /></Inline><Amp /><Amp /><Combo /><Meter /><Amp /><Meter /><Tri w={16} /></Chain>
          </SoundMain>
          <Btn $h={98} aria-label="Volume"><Svg w={30} h={24}><Fill d="M0 8H6L13 2V22L6 16H0Z" /><path d="M17 7Q20 12 17 17M21 4Q26 12 21 20M25 1Q32 12 25 23" /></Svg></Btn>
        </SoundBox>
      </Panel>
      <Panel>
        <h2>INTERPRETATION</h2>
        <Interp>
          <Field $label={174}><label htmlFor="style">Playing style:</label><Drop id="style" label="Playing style" value="Fingers" w={196} bg={c.button} pad={22} end={18} /></Field>
          <Field $label={174}><label htmlFor="palm">Palm mute:</label><Slider id="palm" defaultValue={76} style={{ "--fill": "76%" } as React.CSSProperties} /></Field>
          <Field $label={174}><label htmlFor="accent">Accentuation:</label><Slider id="accent" defaultValue={24} style={{ "--fill": "24%" } as React.CSSProperties} /></Field>
          {([["Auto let ring:", false], ["Auto brush:", true], ["Stringed:", true]] as [string, boolean][]).map(([t, on]) => (
            <Field $label={174} key={t}><label htmlFor={t}>{t}</label><Row $gap={12}><Switch id={t} defaultChecked={on} />{on ? "On" : "Off"}</Row></Field>
          ))}
        </Interp>
      </Panel>
    </Inspector>
  </Right>
);

/* ---------- tracks ---------- */

const Tracks = styled.section`
  display: grid; grid-template-columns: 1090px minmax(0, 1fr); border-top: 4px solid ${c.line}; overflow: hidden;
`;
const List = styled.div`display: flex; flex-direction: column;`;
const cols = css`
  display: grid; align-items: center;
  grid-template-columns: 64px 36px 314px 52px 59px 46px 325px 114px 72px;
`;
const Head = styled.div`${cols} height: 44px; background: ${c.header};`;
const TrackRow = styled.div<{ $c: string; $sel?: boolean }>`
  ${cols} height: 48px; margin-bottom: 2px; font-size: 25px;
  background: linear-gradient(90deg, ${(p) => p.$c} 2px, ${(p) => (p.$sel ? "#7f8084" : "transparent")} 2px);
  &:nth-last-child(2) { margin-bottom: 0; }
`;
const MasterRow = styled.div`${cols} height: 44px; background: ${c.header};`;
const Center = styled.span<{ $c?: string; $end?: boolean }>`
  display: flex; justify-content: center; width: 46px; justify-self: ${(p) => (p.$end ? "end" : "center")}; color: ${(p) => p.$c || c.text};
`;
const Num = styled.span`justify-self: end; color: #9a9cab;`;
const Name = styled.span`display: flex; align-items: center; gap: 14px; padding-left: 6px; white-space: nowrap;`;
const Frame = styled.div<{ $on?: boolean }>`
  display: flex; align-items: center; height: 44px; margin-left: 12px; padding-left: 3px; border: 2px solid ${(p) => (p.$on ? c.green : "transparent")};
  border-radius: 12px; overflow: hidden;
`;
const Vol = styled.input.attrs({ type: "range" })`
  appearance: none; width: 230px; height: 36px;
  &::-webkit-slider-runnable-track { height: 16px; background: #6a6a6b; }
  &::-webkit-slider-thumb { appearance: none; width: 10px; height: 36px; margin-top: -10px; background: #c4c4c4; }
`;
const Peak = styled.span`width: 22px; height: 16px; margin: 0 4px; background: #6a6a6b;`;
const Auto = styled.button<{ $on?: boolean }>`
  flex: 1; height: 44px; font-weight: 700; font-size: 30px;
  background: ${(p) => (p.$on ? c.green : "none")}; color: ${(p) => (p.$on ? c.text : "#68696b")};
`;
const KnobCell = styled.span`display: flex; justify-content: center; flex: none; width: 47px;`;
const Knob = ({ a = 0, blue }: { a?: number; blue?: string }) => (
  <Svg w={40} h={40} sw={3}>
    <circle cx="20" cy="24" r="14" fill="#6c6c6d" stroke="none" />
    <path d="M9 34A17 17 0 1 1 31 34" stroke="#9a9eb3" />
    {blue && <path d={blue} stroke="#7f9bd2" />}
    <path d="M20 3V15" stroke={c.text} strokeWidth="4" transform={`rotate(${a} 20 21)`} />
  </Svg>
);
const Eye = () => <Svg w={32} h={20}><Fill d="M0 10Q16 -9 32 10Q16 29 0 10Z" /><circle cx="16" cy="10" r="6" stroke={c.base} strokeWidth="2.500" /></Svg>;
const Mute = () => <Svg w={28} h={28}><Fill d="M0 9H8L22 1V27L8 19H0Z" /><path d="M2 28L28 0" stroke={c.base} strokeWidth="6" /><path d="M2 28L28 0" strokeWidth="2.500" /></Svg>;
const Phones = () => <Svg w={32} h={28}><path d="M5 18C1 -4 31 -4 27 18" /><rect x="1" y="15" width="10" height="13" rx="4" fill="currentColor" stroke="none" /><rect x="21" y="15" width="10" height="13" rx="4" fill="currentColor" stroke="none" /></Svg>;
const Mixer = () => <Svg w={28} h={28} sw={3}><path d="M4 0V28M14 0V28M24 0V28" /><path d="M0 8H8M10 18H18M20 12H28" strokeWidth="5" /></Svg>;

type Track = { name: string; color: string; from: number; to: number; vol: number; av?: boolean; ap?: boolean; knob?: number; blue?: string; mix?: boolean; icon?: React.ReactNode };
const tracks: Track[] = [
  { name: "E.Guitar I (Rhythm)", color: "#c4a195", from: 1, to: 32, vol: 69, av: true, ap: true, knob: 25 },
  { name: "E.Guitar II (Lead)", color: "#c4a195", from: 9, to: 28, vol: 69, av: true, ap: true, knob: 40 },
  { name: "E.Bass", color: "#c2ba94", from: 5, to: 32, vol: 69 },
  { name: "Rhodes", color: "#c3b095", from: 9, to: 12, vol: 69, knob: -140, blue: "M9 34A17 17 0 0 1 20 4", mix: true },
  { name: "Organ", color: "#c3b095", from: 5, to: 32, vol: 68, knob: 15, blue: "M20 4A17 17 0 0 1 25 5", icon: <Organ /> },
  { name: "Drums", color: "#95b6bf", from: 4, to: 32, vol: 68, av: true, mix: true, icon: <Drum /> },
];

const Timeline = styled.div`display: flex; flex-direction: column; overflow: hidden;`;
const Ruler = styled.div`
  display: grid; grid-template-columns: repeat(33, 50px); align-items: center; height: 44px; background: ${c.header};
  font-size: 22px; text-align: center;
`;
const ClipRow = styled.div`
  display: grid; grid-template-columns: repeat(33, 48px); gap: 2px; height: 48px; margin-bottom: 2px;
  &:nth-last-child(2) { margin-bottom: 0; }
`;
const Bar = styled.span<{ $c?: string }>`background: ${(p) => p.$c || "#7e7f83"};`;
const Markers = styled.div`
  display: grid; grid-template-columns: repeat(33, 50px); align-items: center; height: 44px; background: ${c.header}; font-size: 22px; padding-bottom: 6px;
`;
const Marker = styled.span<{ $at: number }>`
  grid-column: ${(p) => p.$at} / span 4; display: flex; align-items: center; gap: 21px; padding-left: 16px; white-space: nowrap;
`;
const VolTitle = styled.span`padding-left: 146px;`;
const MasterKnob = styled.span`justify-self: start; margin-left: -19px;`;
const HeadChevrons = () => (
  <Svg w={46} h={28} sw={4}>
    <path d="M-72 9L-62 19L-52 9" /><path d="M-38 18L-29 9L-20 18" stroke="#68686a" strokeWidth="2" />
    <path d="M14 0Q10 0 10 5V23Q10 28 14 28" stroke={c.teal} strokeWidth="2" /><path d="M18 14H36" stroke={c.teal} strokeWidth="8" opacity=".5" /><path d="M18 6V22" stroke={c.teal} strokeWidth="2" />
  </Svg>
);

const TrackPanel = () => (
  <Tracks>
    <List>
      <Head>
        <Center><Plus s={24} /></Center><span />
        <Name>Tracks <More3 /></Name>
        <Center $end><HeadChevrons /></Center>
        <Center $end $c={c.teal}><Mute /></Center>
        <Center $c={c.teal}><Phones /></Center>
        <VolTitle>Vol.</VolTitle>
      </Head>
      {tracks.map((t, n) => (
        <TrackRow key={t.name} $c={t.color} $sel={n === 0}>
          <Center>{t.icon || <GuitarHead />}</Center>
          <Num>{n + 1}.</Num>
          <Name>{t.name}</Name>
          <Center $c={n ? c.teal : c.text}><Eye /></Center>
          <Center $end $c={c.teal}><Mute /></Center>
          <Center $c={c.teal}><Phones /></Center>
          <Frame $on={t.av}><Vol aria-label={`${t.name} volume`} defaultValue={t.vol} /><Peak /><Auto $on={t.av}>A</Auto></Frame>
          <Frame $on={t.ap}><KnobCell><Knob a={t.knob} blue={t.blue} /></KnobCell><Auto $on={t.ap}>A</Auto></Frame>
          <Center $c={t.mix ? c.text : c.teal}><Mixer /></Center>
        </TrackRow>
      ))}
      <MasterRow>
        <span /><span /><Name>Master</Name><span />
        <Center $end /><MasterKnob><Knob /></MasterKnob>
        <Frame><Vol aria-label="Master volume" defaultValue={76} /><Peak /><Auto>A</Auto></Frame>
        <Frame><KnobCell><Knob /></KnobCell><Auto>A</Auto></Frame>
      </MasterRow>
    </List>
    <Timeline>
      <Ruler>{Array.from({ length: 33 }, (_, n) => <span key={n}>{(n + 1) % 4 === 0 ? n + 1 : ""}</span>)}</Ruler>
      {tracks.map((t) => (
        <ClipRow key={t.name}>
          {Array.from({ length: 33 }, (_, n) => <Bar key={n} $c={n + 1 >= t.from && n + 1 <= t.to ? t.color : undefined} />)}
        </ClipRow>
      ))}
      <Markers>
        {([["Intro", 1], ["Band Enter", 5], ["Theme", 9], ["Guitar Solo", 13], ["Outro", 29]] as [string, number][]).map(([t, at]) => (
          <Marker key={t} $at={at}><Svg w={15} h={20}><Fill d="M0 0H15V20L7.500 13L0 20Z" /></Svg>{t}</Marker>
        ))}
      </Markers>
    </Timeline>
  </Tracks>
);

/* ---------- dialog ---------- */

const Overlay = styled.div`
  position: fixed; inset: 0; z-index: 3; display: flex; justify-content: center; align-items: flex-start; padding: 280px 0 0 4px;
`;
const Dialog = styled.section`
  width: 1246px; padding: 26px 24px 24px; border-radius: 20px; background: ${c.dialog}; color: #fff;
  box-shadow: 0 0 0 1px rgba(90, 90, 96, 0.7), 0 36px 90px rgba(0, 0, 0, 0.42);
  display: flex; flex-direction: column; gap: 24px;
`;
const DSection = styled.div`display: flex; flex-direction: column; gap: 12px;`;
const DRow = styled.div`
  display: grid; grid-template-columns: 150px minmax(0, 1fr); column-gap: 14px; align-items: center;
  > :first-child { text-align: right; white-space: nowrap; }
`;
const DBtn = styled(Btn)`background: ${(p) => p.$bg || c.control}; color: #fff;`;
const StringsPanel = styled.div`padding: 6px 12px 12px; border-radius: 8px; background: #1b1c21; display: flex; flex-direction: column; gap: 8px;`;
const Minis = styled.div`display: flex; gap: 2px; margin-left: 64px;`;
const Mini = styled.button`
  display: flex; align-items: center; justify-content: center; width: 32px; height: 32px; background: ${c.control};
  &:first-child { border-radius: 12px 0 0 12px; } &:last-child { border-radius: 0 12px 12px 0; }
`;
const Circle = styled.span`
  flex: none; width: 32px; height: 32px; border-radius: 50%; background: ${c.control}; text-align: center; line-height: 33px;
`;
const Spin = styled.div<{ $w: number }>`
  display: flex; flex: none; width: ${(p) => p.$w}px; height: 44px; border-radius: 12px; background: ${c.control}; overflow: hidden;
  > input { flex: 1; min-width: 0; margin: 2px 0 2px 2px; padding: 2px 0 0 8px; background: ${c.field}; border-radius: 10px 0 0 10px; }
`;
const SpinKeys = styled.div`display: grid; grid-template-rows: 1fr 1fr; width: 36px;`;
const Key = styled.button<{ $off?: boolean }>`
  display: flex; align-items: center; justify-content: center; ${(p) => p.$off && css`background: #3b3f54; color: #50586f;`}
`;
const Spinner = ({ value, label, w, id, min }: { value: string; label: string; w: number; id?: string; min?: boolean }) => (
  <Spin $w={w}>
    <input id={id} aria-label={label} defaultValue={value} />
    <SpinKeys><Key aria-label="Up"><Tri up w={16} /></Key><Key $off={min} aria-label="Down"><Tri w={16} /></Key></SpinKeys>
  </Spin>
);
const StringLine = styled.span<{ $h: number }>`
  flex: 1; height: ${(p) => p.$h}px; box-shadow: inset 0 -1px 0 #66718f;
  background: repeating-linear-gradient(90deg, #8490b5 0 4px, #7480a4 4px 6px);
`;
const LabelInput = styled.input`
  flex: 1; height: 48px; margin-right: 28px; padding: 0 12px; border: 2px solid ${c.control}; border-radius: 12px; background: ${c.field};
  &::placeholder { color: #868686; }
`;
const Check = styled.input.attrs({ type: "checkbox" })`
  appearance: none; width: 28px; height: 28px; border-radius: 7px;
  &:checked { background: #5788d6 url("data:image/svg+xml,%3Csvg xmlns='http://www.w3.org/2000/svg' viewBox='0 0 28 28'%3E%3Cpath d='M5 15l6 7L23 6' fill='none' stroke='%23e8edf6' stroke-width='4'/%3E%3C/svg%3E"); }
`;
const CheckLabel = styled.label`margin: 0 24px 0 8px;`;
const Offset = styled.div`padding: 10px 0 0;`;
const Footer = styled.footer`display: flex; gap: 28px; margin-top: 28px; > :first-child { margin-right: auto; }`;
const Grow = styled.b`flex: 1;`;
const DetailText = styled.span`display: flex; align-items: center; gap: 16px;`;

const Fretboard = () => (
  <svg width={700} height={90} viewBox="0 0 700 90" role="img" aria-label="Fretboard">
    <rect width="700" height="90" fill="#333a44" />
    <rect width="9" height="90" fill="#7d88a8" />
    {[10, 45, 79, 109, 140, ...Array.from({ length: 19 }, (_, n) => 168 + 28 * n)].map((x) => (
      <g key={x}><path d={`M${x} 0V90`} stroke="#c4c6cc" strokeWidth="2" /><path d={`M${x - 1.5} 0V90`} stroke="#7b7f88" strokeWidth="1" /></g>
    ))}
    {[7, 21, 37, 51, 67, 81].map((y) => <path key={y} d={`M0 ${y}H700`} stroke="#8c9abd" strokeWidth="2" />)}
    {[95, 154, 210, 266, 434, 490, 546, 602].map((x) => <circle key={x} cx={x} cy="45" r="4" fill="#a9afb8" />)}
    {[350, 686].map((x) => <g key={x} fill="#a9afb8"><circle cx={x} cy="22" r="4" /><circle cx={x} cy="67" r="4" /></g>)}
  </svg>
);

const TuningDialog = () => (
  <Overlay>
    <Dialog role="dialog" aria-label="Tuning">
      <DSection>
        <h2>TUNING</h2>
        <DRow>
          <label htmlFor="library">Library:</label>
          <Row $gap={12}>
            <Drop id="library" label="Strings count" value="6 strings" w={194} pad={22} end={18} mark={<Mark $c="#6fee47" $inset="-4px -2px -2px -2px" />} />
            <Drop label="Instrument" value="Guitar" w={266} pad={66} end={18} icon={<DialogHeadstock />} />
            <Drop label="Tuning preset" value="Dropped D" pad={66} end={18} icon={<Svg w={22} h={28}><Fill d="M4 0H22V22H4Q2 22 2 24Q2 26 4 26H22V28H4Q1 28 1 24V3Q1 0 4 0Z" /><path d="M6 5H17M9 9H15" stroke={c.control} /></Svg>} mark={<Mark $c="#e93d25" $inset="-5px 2px -5px -3px" />} />
            <DBtn $w={48} $h={48} $r={12} aria-label="More options"><More3 /></DBtn>
          </Row>
        </DRow>
        <DRow>
          <span>Strings:</span>
          <Row $gap={12}>
            <Grow>D2 A2 D3 G3 B3 E4</Grow>
            <DBtn $w={118} $h={40} $r={12}><DetailText>Detail<Tri up w={16} /></DetailText></DBtn>
            <DBtn $w={48} $h={48} $r={12} aria-label="Play all"><PlayGlyph /></DBtn>
          </Row>
        </DRow>
        <DRow>
          <span />
          <StringsPanel>
            <Minis>
              <Mini aria-label="Lower all"><Svg w={24} h={16} sw={5}><path d="M2 3L12 12L22 3" /></Svg></Mini>
              <Mini aria-label="Raise all"><Svg w={24} h={16} sw={5}><path d="M2 13L12 4L22 13" /></Svg></Mini>
            </Minis>
            {["E4", "B3", "G3", "D3", "A2", "D2"].map((n, i) => (
              <Row $gap={12} key={n}>
                <Circle>{i + 1}</Circle>
                <Spinner value={n} label={`String ${i + 1}`} w={108} />
                <StringLine $h={2 + i * 2} />
                <DBtn $w={32} $h={32} $r={12} aria-label={`Play string ${i + 1}`}><PlayGlyph w={13} h={20} /></DBtn>
              </Row>
            ))}
          </StringsPanel>
        </DRow>
        <DRow>
          <span>Alteration:</span>
          <Group>
            <DBtn $w={76} $h={48} aria-label="Flat"><Svg w={14} h={34}><Flat x={7} y={18} /></Svg></DBtn>
            <DBtn $w={76} $h={48} $bg={c.blue} aria-label="Sharp"><Svg w={14} h={34}><Sharp x={7} y={17} /></Svg></DBtn>
          </Group>
        </DRow>
      </DSection>
      <DSection>
        <h2>CAPO</h2>
        <DRow><label htmlFor="capo">Capo:</label><Spinner id="capo" label="Capo" value="None" w={138} min /></DRow>
        <DRow>
          <label htmlFor="pcapo">Partial Capo:</label>
          <Row $gap={12}>
            <Spinner id="pcapo" label="Partial capo" value="None" w={138} min />
            <Drop label="Capoed strings" value="No strings capoed" w={500} h={48} pad={10} end={22} />
          </Row>
        </DRow>
        <DRow><span /><Offset><Fretboard /></Offset></DRow>
      </DSection>
      <DSection>
        <h2>DISPLAY</h2>
        <DRow>
          <label htmlFor="label">Label:</label>
          <Row>
            <LabelInput id="label" placeholder="Dropped D" />
            <Check id="visible" defaultChecked />
            <CheckLabel htmlFor="visible">Visible</CheckLabel>
          </Row>
        </DRow>
      </DSection>
      <Footer>
        <Drop label="Show" value="Show" w={150} h={48} pad={22} end={22} />
        <DBtn $w={256} $h={48} $r={12}>Keep the Fingering</DBtn>
        <DBtn $w={118} $h={48} $r={12}>Cancel</DBtn>
        <DBtn $w={270} $h={48} $r={12} $bg={c.blue}>Adjust the Fingering</DBtn>
      </Footer>
    </Dialog>
  </Overlay>
);

/* ---------- toolbar ---------- */

const Window = ({ d }: { d: string }) => <Svg w={36} h={28}><rect x="1" y="1" width="34" height="26" /><path d={d} strokeWidth="4" /></Svg>;
const BeamPair = () => <Svg w={20} h={20}><Note x={5} y={16} r={5} h={14} /><Note x={15} y={16} r={5} h={14} /><path d="M8 2H20" strokeWidth="3" /></Svg>;

const TopToolbar = () => (
  <Toolbar>
    <ToolSide>
      <Btn $w={68} $r={14} aria-label="Home"><Svg w={32} h={30}><Fill d="M16 0L32 15H28V30H20V21H13V30H4V15H0Z" /></Svg></Btn>
      <Group>
        <Btn $w={68} $on aria-label="Left panel"><Window d="M6 4V24" /></Btn>
        <Btn $w={68} $on aria-label="Bottom panel"><Window d="M4 22H32" /></Btn>
        <Btn $w={68} $on aria-label="Right panel"><Window d="M30 4V24" /></Btn>
      </Group>
      <ZoomWrap>
        <Group>
          <Btn $w={156} $spread><Svg w={32} h={32}><circle cx="12" cy="12" r="11" /><path d="M20 20L30 30" strokeWidth="5" /></Svg>100% <Chevrons /></Btn>
          <Btn $w={72} $spread aria-label="Page layout"><Svg w={28} h={32}><path d="M1 1H11V13H1ZM17 1H27V13H17ZM1 19H11V31H1Z" /></Svg><Chevrons /></Btn>
        </Group>
        <ZoomBar />
      </ZoomWrap>
      <Group>
        <Btn $w={68} $off aria-label="Undo"><Svg w={32} h={26} sw={3}><path d="M10 1L2 8L10 15M3 8H22Q30 8 30 16Q30 23 22 24" /></Svg></Btn>
        <Btn $w={68} $off aria-label="Redo"><Svg w={32} h={26} sw={3}><path d="M22 1L30 8L22 15M29 8H10Q2 8 2 16Q2 23 10 24" /></Svg></Btn>
      </Group>
      <Transport>
        <Bare aria-label="First bar"><Svg w={32} h={32}><Fill d="M0 0H5V32H0ZM32 0V32L10 16Z" /></Svg></Bare>
        <Bare aria-label="Rewind"><Svg w={38} h={32}><Fill d="M19 0V32L0 16ZM38 0V32L19 16Z" /></Svg></Bare>
        <Bare $bright aria-label="Play"><Svg w={62} h={62}><circle cx="31" cy="31" r="30" strokeWidth="3" /><Fill d="M23 13L49 31L23 50Z" /></Svg></Bare>
        <Bare aria-label="Forward"><Svg w={38} h={32}><Fill d="M0 0V32L19 16ZM19 0V32L38 16Z" /></Svg></Bare>
        <Bare aria-label="Last bar"><Svg w={30} h={32}><Fill d="M25 0H30V32H25ZM0 0V32L20 16Z" /></Svg></Bare>
      </Transport>
    </ToolSide>
    <Display>
      <DisplayTop>
        <TrackTitle><GuitarHead />1. E.Guitar I (Rhythm)</TrackTitle>
        <DisplayTools>
          <Svg w={20} h={28}><path d="M0 1H20M0 27H20" strokeWidth="2.500" /><path d="M3 1C3 10 9 11 9 14C9 17 3 18 3 27H17C17 18 11 17 11 14C11 11 17 10 17 1" /><Fill d="M4 26Q10 15 16 26Z" /></Svg>
          <Svg w={24} h={28}><Fill d="M9 0H15L24 28H0Z" /><path d="M4 6L14 24" stroke={c.deep} strokeWidth="5" /><path d="M4 5L14 23" strokeWidth="2.500" /></Svg>
          <More3 />
        </DisplayTools>
        <Pitch>E<sub>4</sub></Pitch>
      </DisplayTop>
      <DisplayInfo>
        <span>1/33</span>
        <Inline><Svg w={18} h={18}><circle cx="9" cy="9" r="9" fill="#7fb394" stroke="none" /><path d="M5 9L8 13L14 5" stroke="#e4e4e4" strokeWidth="2.500" /></Svg>4.0:4.0</Inline>
        <span>00:00 / 01:27</span>
        <Inline><BeamPair />=<BeamPair /></Inline>
        <Tempo>
          <Inline><Svg w={12} h={24}><Note x={5} y={19} r={5} h={18} /></Svg>= 120</Inline>
          <Svg w={14} h={28}><Four x={0} y={0} k={0.68} /><Four x={0} y={14} k={0.68} /></Svg>
        </Tempo>
      </DisplayInfo>
    </Display>
    <ToolSide $right>
      <Group>
        <Btn $w={68} $on aria-label="Loop"><Svg w={36} h={28} sw={3}><path d="M12 7H10Q2 7 2 16Q2 26 11 26H25Q34 26 34 16Q34 7 26 7H16M22 1L15 7L22 13" /></Svg></Btn>
        <Btn $w={134}><Svg w={14} h={32}><Note x={6} y={26} r={6} h={26} /></Svg><Pct>100%</Pct></Btn>
        <Btn $w={32} aria-label="Speed"><Chevrons /></Btn>
      </Group>
      <Group>
        <Btn $w={92} $spread><Svg w={32} h={32}><path d="M24 1L14 13Q11 18 14 20Q17 22 21 18L31 8M14 20L1 31" strokeWidth="2.500" /></Svg><Faded>0</Faded><span /></Btn>
        <Btn $w={36} aria-label="Transpose"><Svg w={16} h={36} sw={4}><path d="M8 2V18M0 10H16M0 32H16" /></Svg></Btn>
      </Group>
      <Group $push><Btn $w={68} aria-label="Audio"><Svg w={36} h={24}><path d="M2 8V16M6 6V18M10 2V22M14 7V17M18 10V14M22 7V17M26 0V24M30 6V18M34 9V15" /></Svg></Btn></Group>
      <Group>
        <Btn $w={68} aria-label="Fretboard view"><Headstock /></Btn>
        <Btn $w={68} aria-label="Keyboard view"><Piano /></Btn>
        <Btn $w={68} $off aria-label="Drumkit view"><Drum /></Btn>
      </Group>
      <Group>
        <Btn $w={68} aria-label="Tuner"><Svg w={36} h={30}><path d="M15 2V15Q15 19 18 19Q21 19 21 15V2M18 19V30" strokeWidth="3" /><path d="M11 4Q7 12 11 20M7 2Q2 12 7 22M3 1Q-3 12 3 24M25 4Q29 12 25 20M29 2Q34 12 29 22M33 1Q39 12 33 24" strokeWidth="1.500" /></Svg></Btn>
        <Btn $w={68} aria-label="Line in"><Svg w={36} h={32}><Fill d="M10 13L18 6L23 11L15 18L9 18Z" /><path d="M21 9L35 1" strokeWidth="3.500" strokeDasharray="7 2" /><path d="M10 17Q1 19 2 24Q3 28 9 25Q16 21 18 25Q19 29 14 31" /></Svg></Btn>
      </Group>
    </ToolSide>
  </Toolbar>
);

export default function App() {
  return (
    <>
      <Global />
      <Shell>
        <TitleBar>
          <Lights><Light $c="#c4c4c4" aria-label="Close" /><Light $c="#f5bf4f" aria-label="Minimise" /><Light $c="#61c554" aria-label="Zoom" /></Lights>
          <span>Keystone</span><span />
        </TitleBar>
        <TopToolbar />
        <TabBar><Tab>Keystone</Tab><Tab $plain aria-label="New tab"><Plus s={16} t={4} /></Tab></TabBar>
        <Main>
          <Left>
            <LeftTop>
              <Pair>
                <Group>{[1, 2, 3, 4].map((n) => <Btn key={n} $w={48} $h={48} $bg={n === 1 ? "#ccae8a" : undefined}><Bold>{n}</Bold></Btn>)}</Group>
                <Btn $w={48} $h={48} $r={12} $on aria-label="Multivoice"><Svg w={28} h={32}><path d="M0 8H28M0 12H28M0 16H28M0 20H28M0 24H28" opacity=".5" /><Note x={9} y={11} r={4} h={10} /><Note x={19} y={11} r={4} h={10} /><path d="M12 2H23" strokeWidth="4" /><Note x={9} y={21} r={4} h={11} down /></Svg></Btn>
              </Pair>
              <Btn $w={48} $h={48} $r={12} aria-label="Design mode"><Svg w={32} h={32}><path d="M4 7H28" strokeWidth="3" /><Fill d="M0 7L7 1V13ZM32 7L25 1V13ZM4 15H28L16 32Z" /></Svg></Btn>
            </LeftTop>
            <LeftTop>
              <Btn $w={144} $h={48} $r={14}><Svg w={20} h={30}><rect x="5" y="0" width="10" height="20" rx="5" fill="currentColor" stroke="none" /><path d="M1 12V16Q2 23 10 23Q18 23 19 16V12M10 23V29M4 29H16" /></Svg>Lyrics</Btn>
              <Btn $w={162} $h={48} $r={14}><Svg w={30} h={32}><path d="M8 1H29V22M4 5H26V26" /><path d="M1 10V31H22V10M6 10V31M11 10V31M17 10V31M1 17H22M1 24H22" strokeWidth="1.500" /><path d="M0 10H23" strokeWidth="4" /></Svg>Chords</Btn>
            </LeftTop>
            {palette.map((rows, s) => (
              <Palette key={s}>
                {rows.map((row, r) => (
                  <PaletteRow key={r}>
                    {row.map(([g, st, up]) => (
                      <PaletteCell key={g} $s={st} $upright={!!up} aria-label={g.replace("=", "")}>
                        {g[0] === "=" ? g.slice(1) : <Svg w={st === "wide" ? 106 : 52} h={52}>{glyphs[g]}</Svg>}
                      </PaletteCell>
                    ))}
                  </PaletteRow>
                ))}
              </Palette>
            ))}
          </Left>
          <Score />
          <RightPanel />
        </Main>
        <TrackPanel />
      </Shell>
      <TuningDialog />
    </>
  );
}
